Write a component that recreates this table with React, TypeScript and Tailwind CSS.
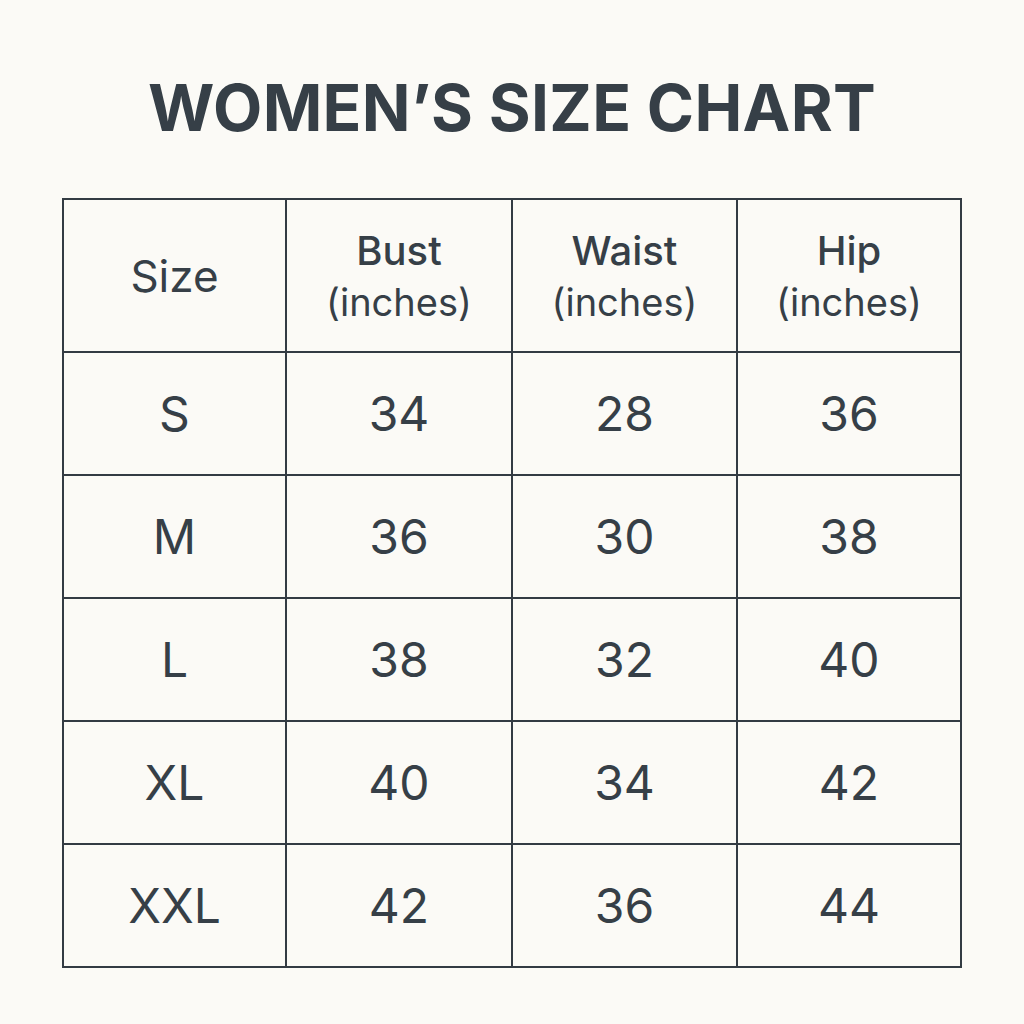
const headers = [
  { title: "Size", sub: "" },
  { title: "Bust", sub: "(inches)" },
  { title: "Waist", sub: "(inches)" },
  { title: "Hip", sub: "(inches)" },
];

const rows = [
  ["S", "34", "28", "36"],
  ["M", "36", "30", "38"],
  ["L", "38", "32", "40"],
  ["XL", "40", "34", "42"],
  ["XXL", "42", "36", "44"],
];

export default function App() {
  return (
    <div className="min-h-[1024px] w-[1024px] bg-[#fbfaf6] text-[#363f47] font-['Inter','Liberation_Sans',sans-serif]">
      <h1 className="pt-[76px] text-center text-[64px] leading-[64px] font-bold tracking-[0.005em]">
        WOMEN’S SIZE CHART
      </h1>

      <table className="mx-auto mt-[58px] w-[898px] border-collapse table-fixed">
        <colgroup>
          <col className="w-[223px]" />
          <col className="w-[226px]" />
          <col className="w-[225px]" />
          <col className="w-[224px]" />
        </colgroup>
        <thead>
          <tr className="h-[153px]">
            {headers.map((h) => (
              <th
                key={h.title}
                className="border-2 border-[#333b43] text-center align-middle font-normal"
              >
                <div className={`${h.sub ? "text-[40px] font-medium" : "text-[44px]"} leading-[52px]`}>{h.title}</div>
                {h.sub && <div className="text-[38px] leading-[50px]">{h.sub}</div>}
              </th>
            ))}
          </tr>
        </thead>
        <tbody>
          {rows.map((r) => (
            <tr key={r[0]} className="h-[123px]">
              {r.map((v, i) => (
                <td
                  key={i}
                  className="border-2 border-[#333b43] text-center align-middle text-[48px]"
                >
                  {v}
                </td>
              ))}
            </tr>
          ))}
        </tbody>
      </table>
    </div>
  );
}
